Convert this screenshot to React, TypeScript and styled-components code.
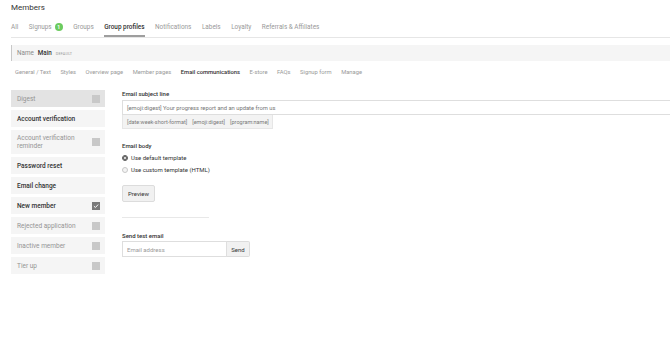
import React from "react";
import styled, { createGlobalStyle } from "styled-components";

const GlobalStyle = createGlobalStyle`
  body {
    margin: 0;
    background: #fff;
    font-family: Roboto, "Noto Sans", sans-serif;
    color: #333;
  }
`;

const Page = styled.div`
  padding-left: 11px;
  width: 659px;
  overflow: hidden;
`;

const PageTitle = styled.h1`
  margin: 0;
  height: 15px;
  line-height: 15px;
  font-size: 8px;
  font-weight: 400;
  color: #333;
`;

const TabBar = styled.nav`
  display: flex;
  gap: 10.5px;
  margin-top: 2px;
  border-bottom: 1px solid #e6e6e6;
`;

const Tab = styled.div<{ $active?: boolean }>`
  display: flex;
  align-items: center;
  gap: 3px;
  padding: 6px 0 4px;
  line-height: 8px;
  font-size: 6.4px;
  font-weight: ${(p) => (p.$active ? 500 : 400)};
  color: ${(p) => (p.$active ? "#333" : "#999")};
  border-bottom: 2px solid ${(p) => (p.$active ? "#9e9e9e" : "transparent")};
`;

const Badge = styled.span`
  display: inline-flex;
  align-items: center;
  justify-content: center;
  width: 8px;
  height: 8px;
  border-radius: 50%;
  background: #6ccb5f;
  color: #fff;
  font-size: 5px;
  font-weight: 700;
`;

const NameBar = styled.div`
  display: flex;
  align-items: center;
  gap: 4px;
  margin-top: 7px;
  height: 16px;
  padding-left: 5px;
  background: #f5f5f5;
  border-left: 1px solid #c8c8c8;
  font-size: 6.3px;
`;

const NameLabel = styled.span`
  color: #8a8a8a;
`;

const NameValue = styled.span`
  color: #333;
  font-weight: 500;
`;

const DefaultTag = styled.span`
  font-size: 3.8px;
  letter-spacing: 0.2px;
  color: #999;
  text-transform: uppercase;
`;

const SubTabs = styled.nav`
  display: flex;
  gap: 9.5px;
  margin-top: 5px;
  padding-left: 4px;
  line-height: 12px;
  font-size: 5.8px;
`;

const SubTab = styled.span<{ $active?: boolean }>`
  color: ${(p) => (p.$active ? "#333" : "#999")};
  font-weight: ${(p) => (p.$active ? 500 : 400)};
`;

const Body = styled.div`
  display: flex;
  gap: 17px;
  margin-top: 12px;
`;

const Sidebar = styled.ul`
  display: flex;
  flex-direction: column;
  gap: 3px;
  width: 94px;
  margin: 0;
  padding: 0;
  list-style: none;
  flex-shrink: 0;
`;

const SideItem = styled.li<{ $selected?: boolean; $enabled?: boolean }>`
  display: flex;
  align-items: center;
  justify-content: space-between;
  min-height: 17px;
  padding: 4px 5px 4px 6px;
  box-sizing: border-box;
  background: ${(p) => (p.$selected ? "#e3e3e3" : "#f5f5f5")};
  font-size: 6.5px;
  line-height: 8px;
  color: ${(p) => (p.$enabled ? "#333" : "#949494")};
  font-weight: ${(p) => (p.$enabled ? 500 : 400)};
`;

const ItemText = styled.span`
  max-width: 66px;
`;

const Check = styled.span<{ $checked?: boolean }>`
  display: inline-flex;
  align-items: center;
  justify-content: center;
  width: 8px;
  height: 8px;
  flex-shrink: 0;
  background: ${(p) => (p.$checked ? "#7a7a7a" : "#c8c8c8")};
`;

const Main = styled.section`
  flex: 1;
  min-width: 0;
`;

const FieldLabel = styled.div<{ $top?: number }>`
  margin-top: ${(p) => p.$top ?? 0}px;
  font-size: 6px;
  line-height: 7px;
  font-weight: 500;
  color: #333;
`;

const SubjectInput = styled.div`
  margin-top: 3px;
  height: 15px;
  display: flex;
  align-items: center;
  padding-left: 4px;
  border: 1px solid #dedede;
  border-right: none;
  box-sizing: border-box;
  font-size: 5.8px;
  color: #757575;
  white-space: nowrap;
`;

const Tokens = styled.div`
  display: flex;
  gap: 5px;
  width: 151px;
  height: 14px;
  align-items: center;
  padding-left: 4px;
  box-sizing: border-box;
  background: #f3f3f3;
  border: 1px solid #e6e6e6;
  border-top: none;
  font-size: 5.5px;
  color: #7a7a7a;
  white-space: nowrap;
`;

const RadioGroup = styled.div`
  display: flex;
  flex-direction: column;
  gap: 5px;
  margin-top: 5px;
`;

const RadioRow = styled.label`
  display: flex;
  align-items: center;
  gap: 3px;
  height: 7px;
  font-size: 6px;
  color: #333;
`;

const RadioDot = styled.span<{ $on?: boolean }>`
  width: 6px;
  height: 6px;
  border-radius: 50%;
  box-sizing: border-box;
  border: ${(p) => (p.$on ? "1.5px solid #555" : "1px solid #c8c8c8")};
  background: ${(p) => (p.$on ? "#fff" : "#f4f4f4")};
  box-shadow: ${(p) => (p.$on ? "inset 0 0 0 1px #555" : "none")};
`;

const Button = styled.button`
  font-family: inherit;
  font-size: 6px;
  color: #333;
  background: #f1f1f1;
  border: 1px solid #dcdcdc;
  border-radius: 2px;
  padding: 0;
  cursor: pointer;
`;

const PreviewButton = styled(Button)`
  display: block;
  margin-top: 12px;
  width: 33px;
  height: 17px;
`;

const Divider = styled.hr`
  margin: 15px 0 0;
  width: 87px;
  border: none;
  border-top: 1px solid #e8e8e8;
`;

const TestRow = styled.div`
  display: flex;
  margin-top: 2px;
  height: 16px;
`;

const EmailField = styled.div`
  width: 105px;
  display: flex;
  align-items: center;
  padding-left: 4px;
  box-sizing: border-box;
  border: 1px solid #dedede;
  font-size: 6px;
  color: #9a9a9a;
`;

const SendButton = styled(Button)`
  width: 23px;
  border-radius: 0 2px 2px 0;
  border-left: none;
`;

const items = [
  { label: "Digest", selected: true, enabled: false, check: "off" },
  { label: "Account verification", enabled: true },
  { label: "Account verification reminder", enabled: false, check: "off" },
  { label: "Password reset", enabled: true },
  { label: "Email change", enabled: true },
  { label: "New member", enabled: true, check: "on" },
  { label: "Rejected application", enabled: false, check: "off" },
  { label: "Inactive member", enabled: false, check: "off" },
  { label: "Tier up", enabled: false, check: "off" },
];

const subTabs = [
  "General / Text",
  "Styles",
  "Overview page",
  "Member pages",
  "Email communications",
  "E-store",
  "FAQs",
  "Signup form",
  "Manage",
];

export default function App() {
  return (
    <Page>
      <GlobalStyle />
      <PageTitle>Members</PageTitle>
      <TabBar>
        <Tab>All</Tab>
        <Tab>
          Signups <Badge>1</Badge>
        </Tab>
        <Tab>Groups</Tab>
        <Tab $active>Group profiles</Tab>
        <Tab>Notifications</Tab>
        <Tab>Labels</Tab>
        <Tab>Loyalty</Tab>
        <Tab>Referrals &amp; Affiliates</Tab>
      </TabBar>

      <NameBar>
        <NameLabel>Name</NameLabel>
        <NameValue>Main</NameValue>
        <DefaultTag>Default</DefaultTag>
      </NameBar>

      <SubTabs>
        {subTabs.map((t) => (
          <SubTab key={t} $active={t === "Email communications"}>
            {t}
          </SubTab>
        ))}
      </SubTabs>

      <Body>
        <Sidebar>
          {items.map((it) => (
            <SideItem key={it.label} $selected={it.selected} $enabled={it.enabled}>
              <ItemText>{it.label}</ItemText>
              {it.check && (
                <Check $checked={it.check === "on"}>
                  {it.check === "on" && (
                    <svg width="6" height="6" viewBox="0 0 10 10">
                      <path d="M1.5 5.2 L4 7.6 L8.6 2.6" fill="none" stroke="#fff" strokeWidth="1.6" />
                    </svg>
                  )}
                </Check>
              )}
            </SideItem>
          ))}
        </Sidebar>

        <Main>
          <FieldLabel>Email subject line</FieldLabel>
          <SubjectInput>[emoji:digest] Your progress report and an update from us</SubjectInput>
          <Tokens>
            <span>[date:week-short-format]</span>
            <span>[emoji:digest]</span>
            <span>[program:name]</span>
          </Tokens>

          <FieldLabel $top={13}>Email body</FieldLabel>
          <RadioGroup>
            <RadioRow>
              <RadioDot $on /> Use default template
            </RadioRow>
            <RadioRow>
              <RadioDot /> Use custom template (HTML)
            </RadioRow>
          </RadioGroup>

          <PreviewButton>Preview</PreviewButton>
          <Divider />

          <FieldLabel $top={14}>Send test email</FieldLabel>
          <TestRow>
            <EmailField>Email address</EmailField>
            <SendButton>Send</SendButton>
          </TestRow>
        </Main>
      </Body>
    </Page>
  );
}
